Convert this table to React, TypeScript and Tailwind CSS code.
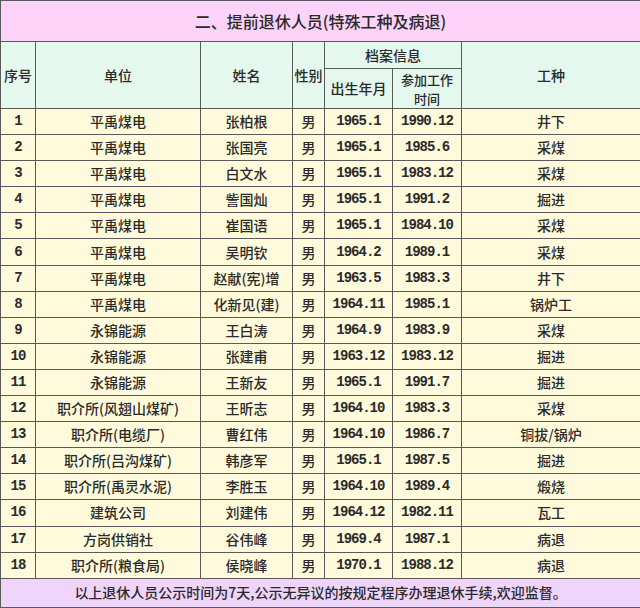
const rows: [string, string, string, string, string, string][] = [
  ['平禹煤电', '张柏根', '男', '1965.1', '1990.12', '井下'],
  ['平禹煤电', '张国亮', '男', '1965.1', '1985.6', '采煤'],
  ['平禹煤电', '白文水', '男', '1965.1', '1983.12', '采煤'],
  ['平禹煤电', '訾国灿', '男', '1965.1', '1991.2', '掘进'],
  ['平禹煤电', '崔国语', '男', '1965.1', '1984.10', '采煤'],
  ['平禹煤电', '吴明钦', '男', '1964.2', '1989.1', '采煤'],
  ['平禹煤电', '赵献(宪)增', '男', '1963.5', '1983.3', '井下'],
  ['平禹煤电', '化新见(建)', '男', '1964.11', '1985.1', '锅炉工'],
  ['永锦能源', '王白涛', '男', '1964.9', '1983.9', '采煤'],
  ['永锦能源', '张建甫', '男', '1963.12', '1983.12', '掘进'],
  ['永锦能源', '王新友', '男', '1965.1', '1991.7', '掘进'],
  ['职介所(风翅山煤矿)', '王昕志', '男', '1964.10', '1983.3', '采煤'],
  ['职介所(电缆厂)', '曹红伟', '男', '1964.10', '1986.7', '铜拔/锅炉'],
  ['职介所(吕沟煤矿)', '韩彦军', '男', '1965.1', '1987.5', '掘进'],
  ['职介所(禹灵水泥)', '李胜玉', '男', '1964.10', '1989.4', '煅烧'],
  ['建筑公司', '刘建伟', '男', '1964.12', '1982.11', '瓦工'],
  ['方岗供销社', '谷伟峰', '男', '1969.4', '1987.1', '病退'],
  ['职介所(粮食局)', '侯晓峰', '男', '1970.1', '1988.12', '病退'],
];

const cell = 'border border-[#5a5a5a] text-center align-middle p-0';
const num = "font-['Liberation_Mono',monospace] font-bold text-[14px] tracking-[-1px]";

export default function App() {
  return (
    <div className="w-[640px] h-[608px] bg-white overflow-hidden font-['Noto_Sans_CJK_SC',sans-serif] text-[#2a2a2a]">
      <table className="w-[640px] table-fixed border-collapse">
        <colgroup>
          <col className="w-[35px]" />
          <col className="w-[165px]" />
          <col className="w-[92px]" />
          <col className="w-[32px]" />
          <col className="w-[68px]" />
          <col className="w-[69px]" />
          <col className="w-[179px]" />
        </colgroup>
        <tbody>
          <tr className="h-[41px] bg-[#fdd3fa]">
            <td colSpan={7} className={`${cell} text-[16px] font-medium`}>
              二、提前退休人员(特殊工种及病退)
            </td>
          </tr>
          <tr className="h-[27px] bg-[#e4f8ee] text-[14px] font-medium">
            <td rowSpan={2} className={cell}>序号</td>
            <td rowSpan={2} className={cell}>单位</td>
            <td rowSpan={2} className={cell}>姓名</td>
            <td rowSpan={2} className={cell}>性别</td>
            <td colSpan={2} className={cell}>档案信息</td>
            <td rowSpan={2} className={cell}>工种</td>
          </tr>
          <tr className="h-[40px] bg-[#e4f8ee] text-[14px] font-medium">
            <td className={cell}>出生年月</td>
            <td className={`${cell} text-[13px] leading-[19px]`}>
              <div>参加工作</div>
              <div>时间</div>
            </td>
          </tr>
          {rows.map((r, i) => (
            <tr key={i} className="h-[26.1px] bg-[#fffadb] text-[14px] font-medium">
              <td className={`${cell} ${num}`}>{i + 1}</td>
              <td className={cell}>{r[0]}</td>
              <td className={cell}>{r[1]}</td>
              <td className={cell}>{r[2]}</td>
              <td className={`${cell} ${num}`}>{r[3]}</td>
              <td className={`${cell} ${num}`}>{r[4]}</td>
              <td className={cell}>{r[5]}</td>
            </tr>
          ))}
          <tr className="h-[29px] bg-[#efd4fb]">
            <td colSpan={7} className={`${cell} text-[14px] font-medium`}>
              以上退休人员公示时间为7天,公示无异议的按规定程序办理退休手续,欢迎监督。
            </td>
          </tr>
        </tbody>
      </table>
    </div>
  );
}
